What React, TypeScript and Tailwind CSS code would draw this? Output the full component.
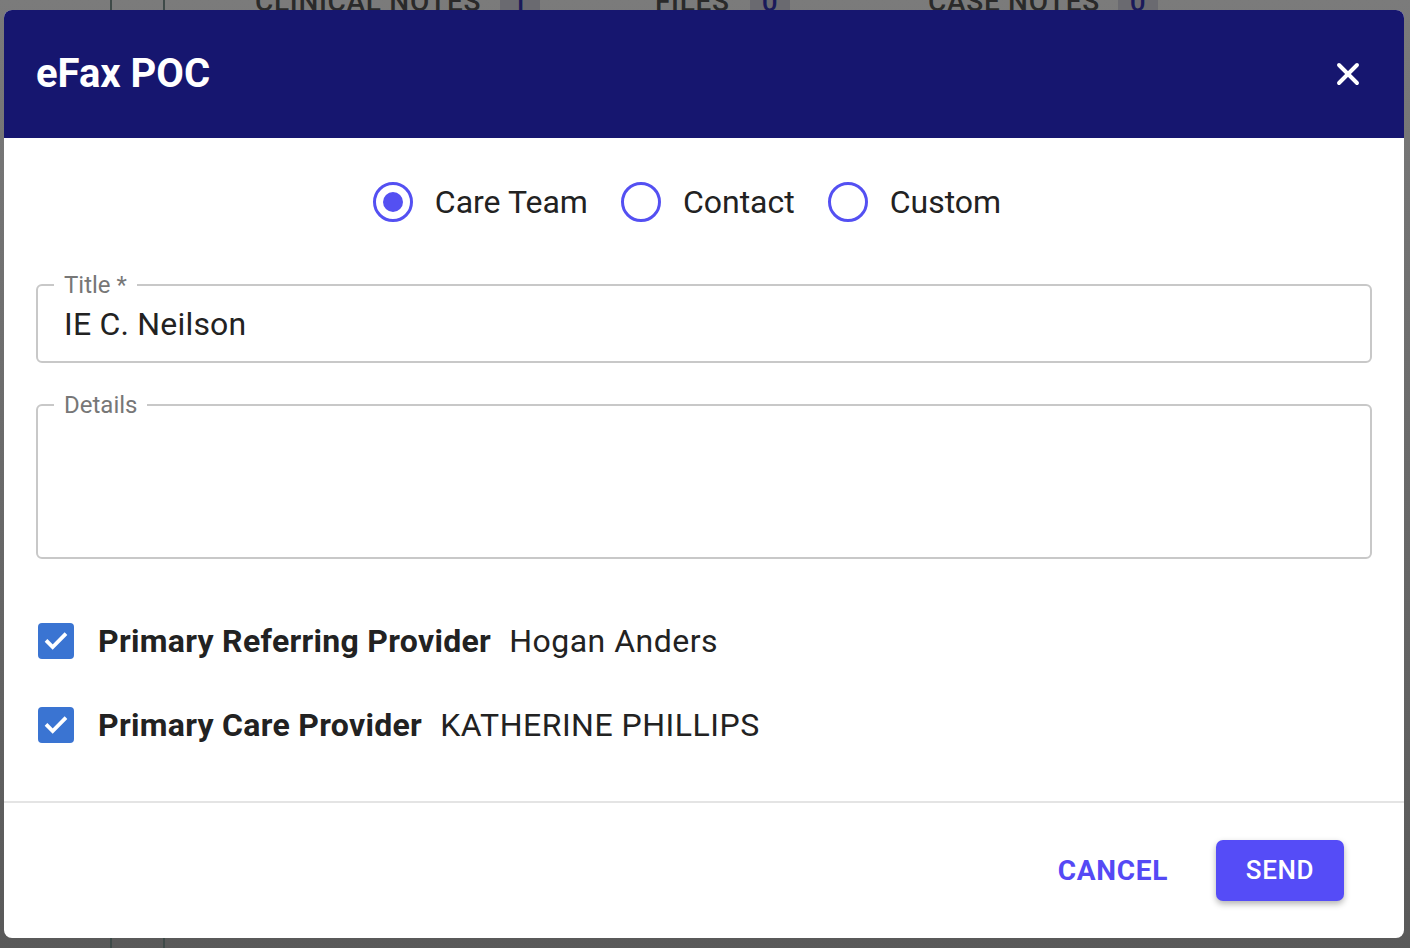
import { X } from "lucide-react";

function Radio({ label, checked }: { label: string; checked?: boolean }) {
  return (
    <label className="flex items-center gap-[22px]">
      <span className="flex h-[40px] w-[40px] items-center justify-center rounded-full border-[3px] border-[#5450f2]">
        {checked && <span className="h-[20px] w-[20px] rounded-full bg-[#5450f2]" />}
      </span>
      <span className="text-[32px] leading-[40px] text-[#222]">{label}</span>
    </label>
  );
}

function Checkbox({ label, value }: { label: string; value: string }) {
  return (
    <div className="flex h-[40px] items-center">
      <span className="flex h-[36px] w-[36px] items-center justify-center rounded-[4px] bg-[#3a74d2]">
        <svg viewBox="0 0 24 24" className="h-[32px] w-[32px]" fill="none" stroke="white" strokeWidth="2.8" strokeLinecap="square">
          <path d="M5.5 12.5l4 4L18.5 7.5" />
        </svg>
      </span>
      <span className="ml-[24px] text-[32px] font-bold tracking-[0.3px] text-[#222]">{label}</span>
      <span className="ml-[18px] text-[32px] tracking-[0.5px] text-[#222]">{value}</span>
    </div>
  );
}

function Outlined({ label, value, height }: { label: string; value?: string; height: number }) {
  return (
    <fieldset
      className="rounded-[6px] border-2 border-[#c8c8c8] px-[16px]"
      style={{ height }}
    >
      <legend className="px-[10px] text-[24px] leading-[24px] text-[#777]">{label}</legend>
      {value && <div className="mt-[7px] px-[10px] text-[32px] leading-[40px] tracking-[0.2px] text-[#222]">{value}</div>}
    </fieldset>
  );
}

export default function App() {
  return (
    <div className="relative h-[948px] w-[1410px] overflow-hidden bg-gradient-to-b from-[#7b7b7b] to-[#595959] font-['Roboto',sans-serif]">
      <div className="absolute left-[110px] top-0 h-full w-[2px] bg-[#3e4a48]" />
      <div className="absolute left-[163px] top-0 h-full w-[2px] bg-[#3e4a48]" />
      <div className="absolute left-0 top-[-11px] h-[26px] w-full text-[28px] font-medium leading-[26px] tracking-wide text-[#2a2a2a]">
        <span className="absolute left-[255px]">CLINICAL NOTES</span>
        <span className="absolute left-[500px] flex h-[26px] w-[40px] items-center justify-center bg-[#6a6a70] text-[#1a1a5a]">1</span>
        <span className="absolute left-[655px]">FILES</span>
        <span className="absolute left-[750px] flex h-[26px] w-[40px] items-center justify-center bg-[#6a6a70] text-[#1a1a5a]">0</span>
        <span className="absolute left-[928px]">CASE NOTES</span>
        <span className="absolute left-[1118px] flex h-[26px] w-[40px] items-center justify-center bg-[#6a6a70] text-[#1a1a5a]">0</span>
      </div>

      <div className="absolute left-[4px] top-[10px] flex h-[928px] w-[1400px] flex-col overflow-hidden rounded-[8px] bg-white">
        <header className="flex h-[128px] shrink-0 items-center justify-between bg-[#16166f] pl-[32px] pr-[38px]">
          <h1 className="text-[40px] font-bold text-white">eFax POC</h1>
          <X className="h-[36px] w-[36px] text-white" strokeWidth={2.6} />
        </header>

        <div className="flex flex-1 flex-col px-[32px]">
          <div className="mt-[44px] flex justify-center gap-[33px] pr-[34px]">
            <Radio label="Care Team" checked />
            <Radio label="Contact" />
            <Radio label="Custom" />
          </div>

          <div className="mt-[51px]">
            <Outlined label="Title *" value="IE C. Neilson" height={90} />
          </div>
          <div className="mt-[30px]">
            <Outlined label="Details" height={166} />
          </div>

          <div className="mt-[62px] flex flex-col gap-[44px] pl-[2px]">
            <Checkbox label="Primary Referring Provider" value="Hogan Anders" />
            <Checkbox label="Primary Care Provider" value="KATHERINE PHILLIPS" />
          </div>
        </div>

        <footer className="flex h-[137px] shrink-0 items-center justify-end gap-[48px] border-t-2 border-[#e4e4e4] pr-[60px]">
          <button className="text-[28px] font-bold tracking-wide text-[#5549f5]">CANCEL</button>
          <button className="h-[61px] w-[128px] rounded-[7px] bg-[#554cf7] text-[26px] font-medium tracking-wide text-white shadow-[0_3px_6px_rgba(0,0,0,0.3)]">
            SEND
          </button>
        </footer>
      </div>
    </div>
  );
}
